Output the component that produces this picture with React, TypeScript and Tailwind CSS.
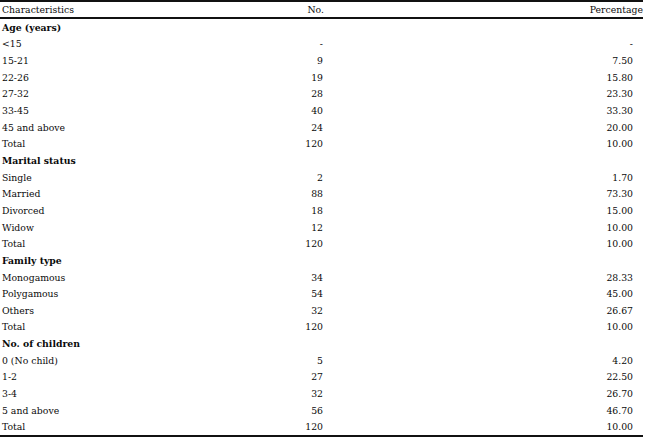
import React from "react";

type Row = { label: string; no?: string; pct?: string; bold?: boolean };

const rows: Row[] = [
  { label: "Age (years)", bold: true },
  { label: "<15", no: "-", pct: "-" },
  { label: "15-21", no: "9", pct: "7.50" },
  { label: "22-26", no: "19", pct: "15.80" },
  { label: "27-32", no: "28", pct: "23.30" },
  { label: "33-45", no: "40", pct: "33.30" },
  { label: "45 and above", no: "24", pct: "20.00" },
  { label: "Total", no: "120", pct: "10.00" },
  { label: "Marital status", bold: true },
  { label: "Single", no: "2", pct: "1.70" },
  { label: "Married", no: "88", pct: "73.30" },
  { label: "Divorced", no: "18", pct: "15.00" },
  { label: "Widow", no: "12", pct: "10.00" },
  { label: "Total", no: "120", pct: "10.00" },
  { label: "Family type", bold: true },
  { label: "Monogamous", no: "34", pct: "28.33" },
  { label: "Polygamous", no: "54", pct: "45.00" },
  { label: "Others", no: "32", pct: "26.67" },
  { label: "Total", no: "120", pct: "10.00" },
  { label: "No. of children", bold: true },
  { label: "0 (No child)", no: "5", pct: "4.20" },
  { label: "1-2", no: "27", pct: "22.50" },
  { label: "3-4", no: "32", pct: "26.70" },
  { label: "5 and above", no: "56", pct: "46.70" },
  { label: "Total", no: "120", pct: "10.00" },
];

export default function App() {
  return (
    <div
      className="w-[643px] bg-white text-[#0a0a0a] text-[9.3px] leading-none"
      style={{ fontFamily: '"DejaVu Serif", serif' }}
    >
      <div className="flex items-center h-[19px] border-t-2 border-b-2 border-[#111]">
        <div className="w-[260px] pl-[2px]">Characteristics</div>
        <div className="w-[64px] text-right">No.</div>
        <div className="flex-1 text-right">Percentage</div>
      </div>
      <div className="border-b-2 border-[#111]">
        {rows.map((r, i) => (
          <div key={i} className="flex items-center h-[16.67px]">
            <div className={"w-[260px] pl-[2px] " + (r.bold ? "font-bold" : "")}>{r.label}</div>
            <div className="w-[63px] text-right">{r.no ?? ""}</div>
            <div className="flex-1 text-right pr-[10px]">{r.pct ?? ""}</div>
          </div>
        ))}
      </div>
    </div>
  );
}
